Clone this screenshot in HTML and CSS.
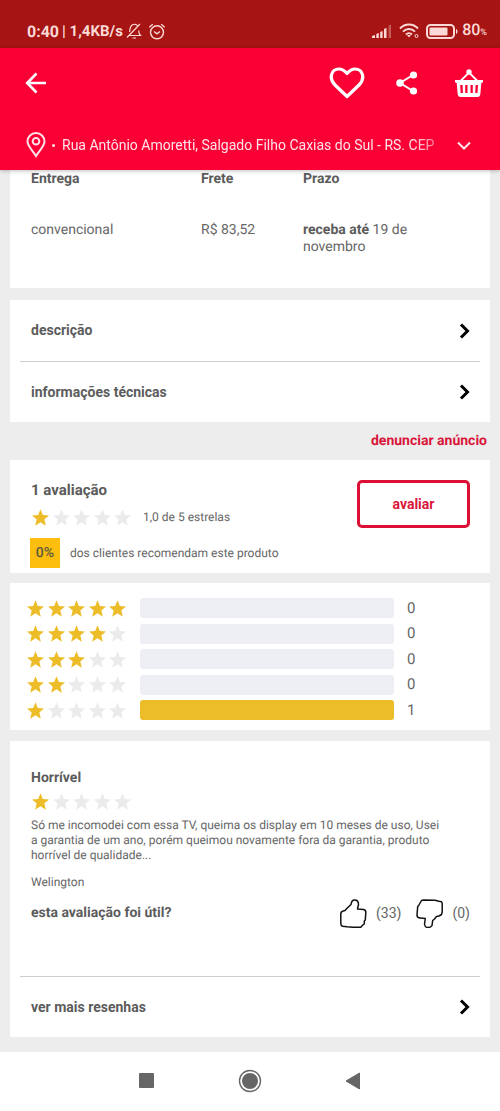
FILE: index.html
```html
<!DOCTYPE html>
<html lang="pt-BR">
<head>
<meta charset="utf-8">
<meta name="viewport" content="width=device-width, initial-scale=1">
<title>Avaliações do produto</title>
<link rel="stylesheet" href="styles.css">
</head>
<body>
<svg class="sprite" aria-hidden="true">
  <symbol id="star" viewBox="0 0 24 23"><path d="M12 0l3.300 8 8.700.6-6.600 5.700 2.100 8.700-7.500-4.800-7.500 4.800 2.100-8.700L0 8.600 8.700 8z"/></symbol>
  <symbol id="chevron" viewBox="0 0 12 16"><path d="M2 1.500L8.500 8 2 14.500" fill="none" stroke="currentColor" stroke-width="3"/></symbol>
</svg>

<div class="status-bar">
  <div class="status-group">
    <span class="clock">0:40</span><span class="rate">| 1,4KB/s</span>
    <svg class="bell" width="16" height="17" viewBox="0 0 16 17" fill="none" stroke="currentColor" stroke-width="1.200"><path d="M3 12.500h11.500c-1.800-1.500-1.800-3-1.800-5M3.600 9c.4-2 .1-5 2.200-6.700 2-1.600 4.500-1.200 5.700.3M1 14.500L14 1M6.500 15h3.500"/></svg>
    <svg class="alarm" width="18" height="17" viewBox="0 0 18 17" fill="none" stroke="currentColor" stroke-width="1.400"><circle cx="9" cy="9.300" r="6.500"/><path d="M6 8.500l3 2.400 3-2.400M1.300 4.200L4.800 1.300M16.700 4.200l-3.500-2.900"/></svg>
  </div>
  <div class="status-group">
    <svg width="20" height="14" viewBox="0 0 20 14" fill="currentColor"><path d="M0 14v-2l3-1v3zM4.300 14v-4l2.500-1v5zM8.200 14V8l2.400-1v7zM12 14V5l2.500-1.200V14z"/><path d="M16.500 14V1.500L19 .5V14z" opacity=".35"/></svg>
    <svg class="wifi" width="20" height="16" viewBox="0 0 20 16" fill="none" stroke="currentColor" stroke-width="2"><path d="M1 5.500c5-5.300 13-5.300 18 0M4 8.600c3.500-3.600 8.500-3.600 12 0M7 11.500c1.700-1.700 4.300-1.700 6 0"/><path d="M8 12h4l-2 2.500z" fill="currentColor" stroke="none"/><circle cx="17.500" cy="13" r="1.500" stroke-width="1"/></svg>
    <svg width="32" height="15" viewBox="0 0 32 15"><rect x="1" y="1" width="27" height="13" rx="3.500" fill="none" stroke="currentColor" stroke-width="2"/><rect x="3.500" y="3.500" width="18" height="8" rx="1" fill="currentColor"/><path d="M30 5c2 .5 2 4.500 0 5z" fill="currentColor"/></svg>
    <span class="battery">80<small>%</small></span>
  </div>
</div>

<header class="app-header">
  <div class="toolbar">
    <button class="icon-button" aria-label="Voltar"><svg width="22" height="22" viewBox="0 0 22 22" fill="none" stroke="currentColor" stroke-width="2.600"><path d="M21 11H2.500M11.500 1.500L2.200 11l9.300 9.500"/></svg></button>
    <div class="actions">
      <button class="icon-button" aria-label="Favoritar"><svg width="36" height="32" viewBox="0 0 36 32" fill="none" stroke="currentColor" stroke-width="3.200" stroke-linejoin="round"><path d="M18 29.500L6 18C-.5 11.500 2 2 10 2c4 0 6 2.200 8 4.500C20 4.200 22 2 26 2c8 0 10.500 9.500 4 16z"/></svg></button>
      <button class="icon-button" aria-label="Compartilhar"><svg width="22" height="24" viewBox="0 0 22 24" fill="currentColor"><path d="M17 4L4 12l13 8" fill="none" stroke="currentColor" stroke-width="2"/><circle cx="17.500" cy="4" r="3.600"/><circle cx="4" cy="12" r="3.800"/><circle cx="17.500" cy="20" r="3.600"/></svg></button>
      <button class="icon-button" aria-label="Cesta"><svg width="28" height="29" viewBox="0 0 28 29" fill="currentColor"><path d="M5 12.500L14 3.500l9 9" fill="none" stroke="currentColor" stroke-width="1.800"/><circle cx="14" cy="3" r="2.700"/><path fill-rule="evenodd" d="M0 11h28v2.200l-1.700.8-1 11.500q-.4 2.500-3 2.500H5.700q-2.600 0-3-2.500L1.700 14 0 13.200zM5.200 16l.4 8h2.300l-.3-8zM10.200 16v8h2.300v-8zM15.500 16v8h2.300v-8zM20.600 16l-.4 8h2.300l.5-8z"/></svg></button>
    </div>
  </div>
  <button class="address">
    <svg width="20" height="26" viewBox="0 0 20 26" fill="none" stroke="currentColor" stroke-width="2"><path d="M10 24C7 19 1.500 14 1.500 9.500a8.500 8.500 0 0 1 17 0C18.500 14 13 19 10 24z"/><circle cx="10" cy="9.300" r="3.300"/></svg>
    <span class="dot"></span>
    <span class="address-text">Rua Antônio Amoretti, Salgado Filho Caxias do Sul - RS. CEP</span>
    <svg width="14" height="9" viewBox="0 0 14 9" fill="none" stroke="currentColor" stroke-width="2"><path d="M1 1.500l6 6 6-6"/></svg>
  </button>
</header>

<main class="content">
  <section class="card shipping">
    <table>
      <thead><tr><th class="col-type">Entrega</th><th class="col-price">Frete</th><th>Prazo</th></tr></thead>
      <tbody><tr><td>convencional</td><td>R$ 83,52</td><td><strong>receba até</strong> 19 de<br>novembro</td></tr></tbody>
    </table>
  </section>

  <section class="card links">
    <button class="link-row">descrição<svg class="chevron"><use href="#chevron"/></svg></button>
    <button class="link-row divided">informações técnicas<svg class="chevron"><use href="#chevron"/></svg></button>
  </section>

  <a class="report" href="#">denunciar anúncio</a>

  <section class="card summary">
    <div class="summary-info">
      <h2>1 avaliação</h2>
      <div class="score">
        <div class="stars" role="img" aria-label="1 de 5"><svg class="on"><use href="#star"/></svg><svg><use href="#star"/></svg><svg><use href="#star"/></svg><svg><use href="#star"/></svg><svg><use href="#star"/></svg></div>
        <span>1,0 de 5 estrelas</span>
      </div>
      <div class="recommend"><span class="percent">0%</span><span>dos clientes recomendam este produto</span></div>
    </div>
    <button class="rate-button">avaliar</button>
  </section>

  <section class="card histogram">
    <div class="bar-row">
      <div class="stars"><svg class="on"><use href="#star"/></svg><svg class="on"><use href="#star"/></svg><svg class="on"><use href="#star"/></svg><svg class="on"><use href="#star"/></svg><svg class="on"><use href="#star"/></svg></div>
      <div class="bar"><div class="fill" style="width:0%"></div></div><span>0</span>
    </div>
    <div class="bar-row">
      <div class="stars"><svg class="on"><use href="#star"/></svg><svg class="on"><use href="#star"/></svg><svg class="on"><use href="#star"/></svg><svg class="on"><use href="#star"/></svg><svg><use href="#star"/></svg></div>
      <div class="bar"><div class="fill" style="width:0%"></div></div><span>0</span>
    </div>
    <div class="bar-row">
      <div class="stars"><svg class="on"><use href="#star"/></svg><svg class="on"><use href="#star"/></svg><svg class="on"><use href="#star"/></svg><svg><use href="#star"/></svg><svg><use href="#star"/></svg></div>
      <div class="bar"><div class="fill" style="width:0%"></div></div><span>0</span>
    </div>
    <div class="bar-row">
      <div class="stars"><svg class="on"><use href="#star"/></svg><svg class="on"><use href="#star"/></svg><svg><use href="#star"/></svg><svg><use href="#star"/></svg><svg><use href="#star"/></svg></div>
      <div class="bar"><div class="fill" style="width:0%"></div></div><span>0</span>
    </div>
    <div class="bar-row">
      <div class="stars"><svg class="on"><use href="#star"/></svg><svg><use href="#star"/></svg><svg><use href="#star"/></svg><svg><use href="#star"/></svg><svg><use href="#star"/></svg></div>
      <div class="bar"><div class="fill" style="width:100%"></div></div><span>1</span>
    </div>
  </section>

  <section class="card reviews">
    <article class="review">
      <h3>Horrível</h3>
      <div class="stars" role="img" aria-label="1 de 5"><svg class="on"><use href="#star"/></svg><svg><use href="#star"/></svg><svg><use href="#star"/></svg><svg><use href="#star"/></svg><svg><use href="#star"/></svg></div>
      <p class="review-text">Só me incomodei com essa TV, queima os display em 10 meses de uso, Usei a garantia de um ano, porém queimou novamente fora da garantia, produto horrível de qualidade...</p>
      <p class="author">Welington</p>
      <div class="helpful">
        <strong>esta avaliação foi útil?</strong>
        <div class="votes">
          <button class="vote" aria-label="Útil, 33"><svg width="27" height="29" viewBox="0 0 27 29" fill="none" stroke="currentColor" stroke-width="1.500" stroke-linejoin="round"><path d="M11 5.500Q11.500 1 14.500 1q4 0 4 4.500L17.500 10l6 .5q2.500.5 2.300 3l-.5 7.500-1 1v3l-1.500 1-2 2.200H13L7 27.700l-4.500-.5q-1.700-.7-1.700-2.700V15q0-2.500 2.400-3L5 11.500 7.500 8.800z"/></svg><span>(33)</span></button>
          <button class="vote" aria-label="Não útil, 0"><svg width="27" height="29" viewBox="0 0 27 29" fill="none" stroke="currentColor" stroke-width="1.500" stroke-linejoin="round"><path d="M5.500 1.500Q6 1 8 1l11 .3 4 1 2.500.5q.8.500.7 2.200v8l-.7 2.500-2.500 1.500-2.500.5-2 2.500-1.800 1.500-.7 5Q15 28.500 12 28.500t-3.500-3.500l.8-5.500-5-.5Q1 19 1 16l.7-8.500 1-1z"/></svg><span>(0)</span></button>
        </div>
      </div>
    </article>
    <button class="link-row divided">ver mais resenhas<svg class="chevron"><use href="#chevron"/></svg></button>
  </section>
</main>

<nav class="system-nav">
  <button class="icon-button" aria-label="Recentes"><svg width="16" height="16" viewBox="0 0 16 16"><rect x="0" y="0" width="15" height="15" rx="1" fill="currentColor"/></svg></button>
  <button class="icon-button" aria-label="Início"><svg width="24" height="24" viewBox="0 0 24 24"><circle cx="12" cy="12" r="10.500" fill="none" stroke="currentColor" stroke-width="1.400"/><circle cx="12" cy="12" r="8" fill="currentColor"/></svg></button>
  <button class="icon-button" aria-label="Voltar"><svg width="16" height="18" viewBox="0 0 16 18"><path d="M14.500 1v16L1 9z" fill="currentColor" stroke="currentColor" stroke-linejoin="round"/></svg></button>
</nav>
</body>
</html>
```

FILE: styles.css
```css
* { box-sizing: border-box; }
body {
  margin: 0;
  min-height: 100vh;
  display: flex;
  flex-direction: column;
  background: #ededed;
  color: #666;
  font: 14px/17px Roboto, sans-serif;
  text-rendering: geometricPrecision;
}
h2, h3, p { margin: 0; }
button {
  margin: 0;
  padding: 0;
  border: 0;
  background: none;
  color: inherit;
  font: inherit;
  text-align: left;
  cursor: pointer;
}
svg { display: block; flex: none; }
strong, th, h2, h3 { color: #5c5c5c; font-weight: 700; }
h2 { font-size: 15px; }
h3 { font-size: 14px; }
.sprite { position: absolute; width: 0; height: 0; }

.status-bar {
  display: flex;
  justify-content: space-between;
  height: 48px;
  padding: 14px 13px 0 27px;
  background: #a61413;
  color: #fbd9d6;
}
.status-group { display: flex; align-items: center; gap: 7px; }
.status-group:first-child { gap: 3px; }
.clock { font-size: 16px; font-weight: 700; }
.rate { font-size: 15px; font-weight: 700; }
.alarm { margin-left: 3px; }
.battery { font-size: 16px; font-weight: 500; margin-left: -3px; }
.battery small { font-size: 9px; }

.app-header {
  position: relative;
  background: #fb0035;
  color: #fff;
  box-shadow: 0 1px 4px rgba(0, 0, 0, .25);
}
.toolbar {
  display: flex;
  align-items: center;
  justify-content: space-between;
  height: 70px;
  padding: 0 17px 0 25px;
}
.actions { display: flex; align-items: center; gap: 31px; }
.actions .icon-button:last-child { margin-left: 6px; }
.address {
  display: flex;
  align-items: center;
  width: 100%;
  height: 52px;
  padding: 2px 29px 0 26px;
  color: #ffe3e8;
}
.dot { width: 3px; height: 3px; margin: 0 7px 0 6px; border-radius: 50%; background: currentColor; }
.address-text {
  flex: 1;
  min-width: 0;
  margin-right: 12px;
  overflow: hidden;
  white-space: nowrap;
  mask-image: linear-gradient(to left, rgba(0, 0, 0, .3), #000 32px);
}

.content { flex: 1; padding: 0 10px; }
.card { background: #fff; }

.shipping { padding: 1px 20px 32px 21px; }
.shipping table { width: 100%; table-layout: fixed; border-collapse: collapse; }
.shipping th, .shipping td { padding: 0; text-align: left; vertical-align: top; }
.shipping th { padding-bottom: 34px; }
.shipping .col-type { width: 170px; }
.shipping .col-price { width: 102px; }

.links { margin-top: 12px; padding: 0 10px; }
.link-row {
  display: flex;
  align-items: center;
  justify-content: space-between;
  width: 100%;
  height: 61px;
  padding: 0 9px 0 11px;
  color: #5c5c5c;
  font-weight: 700;
}
.divided { border-top: 1px solid #cfcfcf; }
.chevron { width: 12px; height: 16px; color: #000; }
.report {
  display: block;
  padding: 11px 3px 10px;
  color: #d9163a;
  font-weight: 700;
  text-align: right;
  text-decoration: none;
}

.summary {
  display: flex;
  align-items: flex-start;
  justify-content: space-between;
  padding: 20px 20px 5px;
  font-size: 12px;
}
.summary h2 { padding: 2px 0 0 1px; }
.score { display: flex; align-items: center; gap: 12px; padding: 10px 0 0 2px; }
.stars { display: flex; justify-content: space-between; width: 99px; }
.stars svg { width: 17px; height: 17px; fill: #ebebeb; }
.stars .on { fill: #ecbd28; }
.recommend { display: flex; align-items: center; gap: 10px; margin-top: 12px; }
.percent {
  display: grid;
  place-items: center;
  width: 30px;
  height: 30px;
  background: #fdbe0d;
  color: #5c5940;
  font-size: 14px;
  font-weight: 500;
}
.rate-button {
  width: 113px;
  height: 48px;
  border: 3px solid #dc1035;
  border-radius: 5px;
  color: #d9163a;
  font-weight: 700;
  font-size: 14px;
  text-align: center;
}

.histogram {
  display: flex;
  flex-direction: column;
  justify-content: space-between;
  min-height: 147px;
  margin-top: 10px;
  padding: 15px 17px 10px;
  font-size: 15px;
}
.bar-row { display: grid; grid-template-columns: 99px 1fr 66px; align-items: center; }
.bar { height: 20px; margin: 0 13px 0 14px; border-radius: 3px; background: #eeeff4; overflow: hidden; }
.fill { height: 100%; background: #ecbd28; }

.reviews { margin-top: 11px; padding: 29px 10px 0; }
.review { padding: 0 10px 48px 11px; }
.review .stars { margin: 6px 0 8px 1px; }
.review-text { padding-right: 24px; font-size: 12px; line-height: 15px; }
.author { margin-top: 11px; font-size: 12px; }
.helpful { display: flex; align-items: center; justify-content: space-between; margin-top: 8px; }
.votes { display: flex; gap: 15px; }
.vote { display: flex; align-items: center; gap: 9px; }
.vote svg { color: #111; }

.system-nav {
  display: flex;
  align-items: center;
  justify-content: space-around;
  height: 59px;
  padding: 0 98px 2px;
  background: #fff;
  color: #666;
}
```
